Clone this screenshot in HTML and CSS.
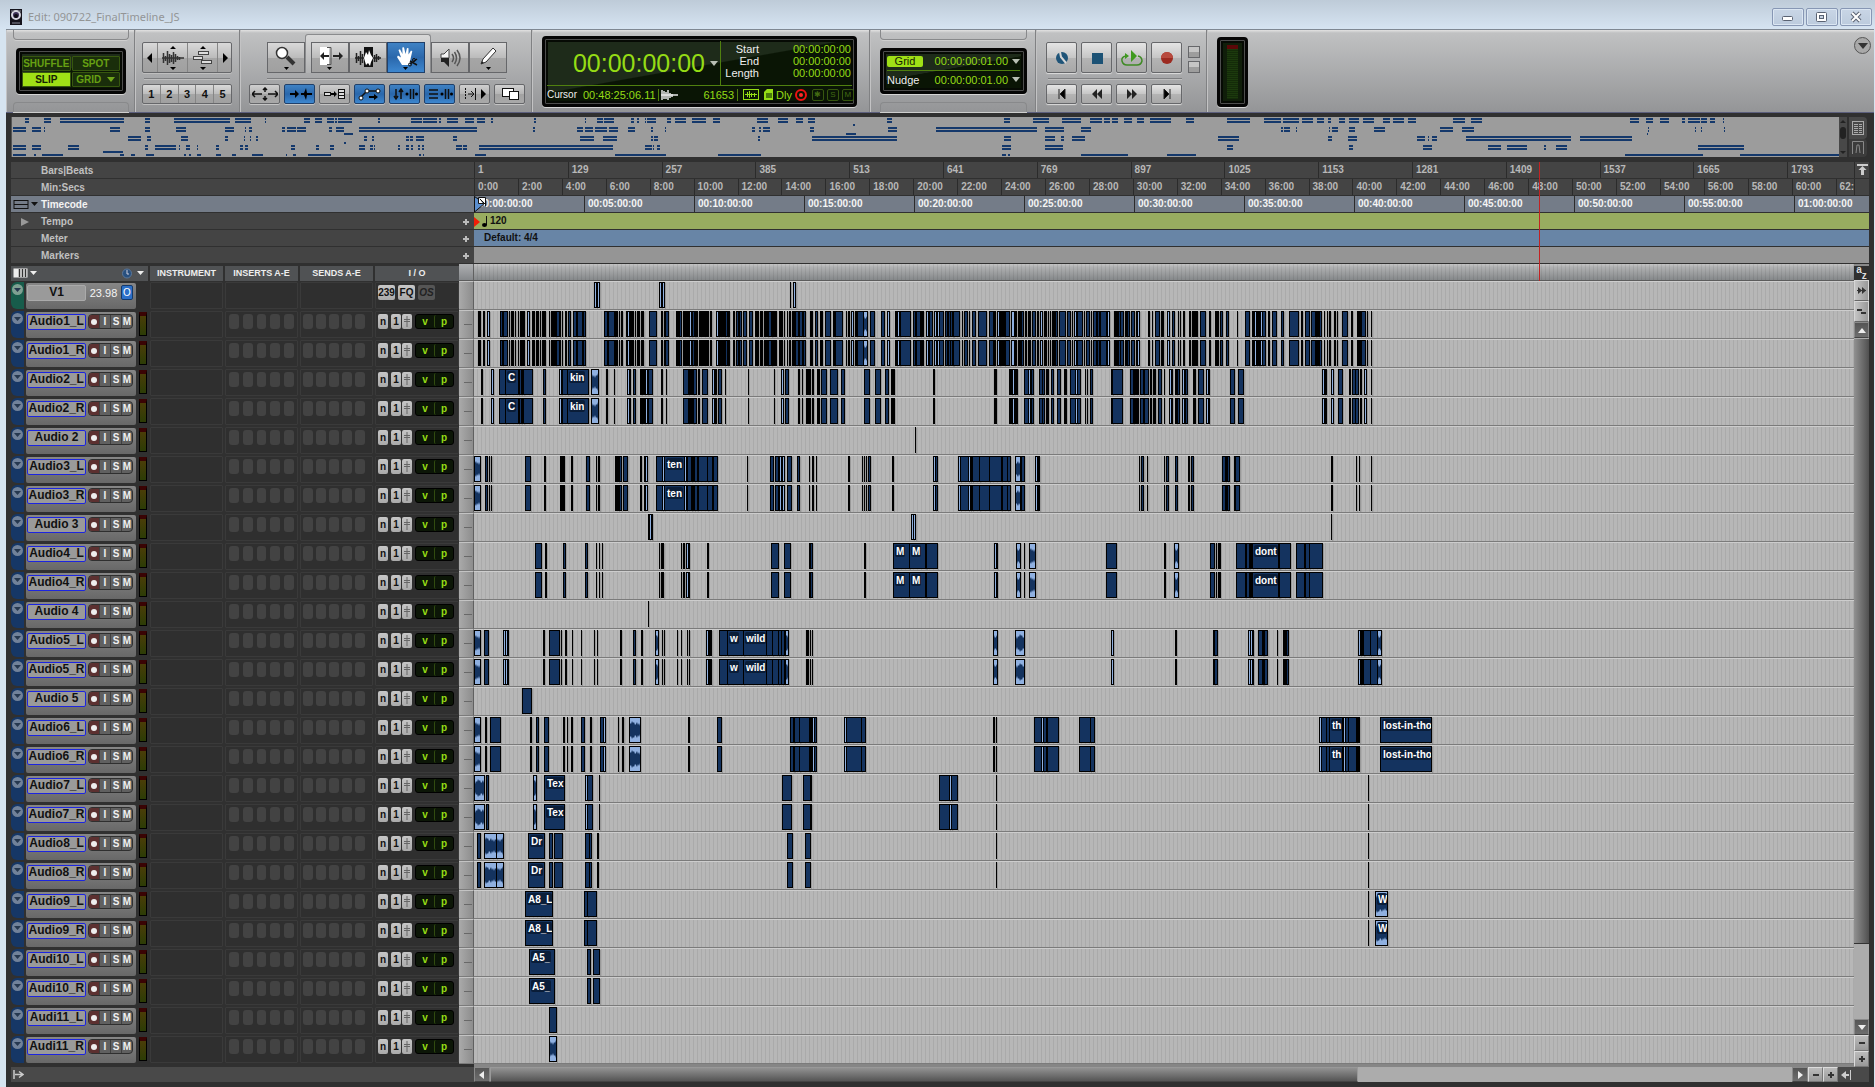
FILE: index.html
```html
<!DOCTYPE html>
<html lang="en">

<head>
    <meta charset="UTF-8">
    <meta name="viewport" content="width=device-width, initial-scale=1.0">
    <title>Edit: 090722_FinalTimeline_JS</title>
    <link rel="stylesheet" href="styles.css">
</head>

<body>
    <header class="titlebar">
        <svg class="app-icon" width="12" height="16" viewBox="0 0 12 16">
            <rect width="12" height="16" fill="#15131c"/>
            <circle cx="6" cy="6" r="4" fill="#3b2e55" stroke="#d5d5de" stroke-width="2"/>
            <circle cx="6" cy="7" r="2" fill="#0c0a12"/>
            <path d="M1 2h3M8 2h3M2 14h8" stroke="#8b8b98"/>
        </svg>
        <h1>Edit: 090722_FinalTimeline_JS</h1>
        <div class="window-buttons">
            <button aria-label="Minimize"><svg width="14" height="12"><rect x="1.500" y="5.500" width="10" height="4" rx="1" fill="#fff" stroke="#5a6373"/></svg></button>
            <button aria-label="Maximize"><svg width="14" height="12"><rect x="1.500" y="1.500" width="10" height="9" rx="1" fill="#fff" stroke="#5a6373"/><rect x="4.500" y="4.500" width="4" height="3" fill="#c5d1df" stroke="#5a6373"/></svg></button>
            <button aria-label="Close"><svg width="14" height="12"><path d="M3 2l8 8M11 2l-8 8" stroke="#5a6373" stroke-width="4"/><path d="M3 2l8 8M11 2l-8 8" stroke="#fff" stroke-width="2"/></svg></button>
        </div>
    </header>

    <div class="window">
        <div class="toolbar">
            <div class="group group-modes">
                <span class="tab tab-top"></span>
                <div class="display modes">
                    <button>SHUFFLE</button>
                    <button>SPOT</button>
                    <button class="on">SLIP</button>
                    <button>GRID <svg width="8" height="5"><path d="M0 0h8l-4 5z" fill="#6fa61a"/></svg></button>
                </div>
                <span class="tab tab-bottom"></span>
            </div>

            <div class="group group-zoom">
                <div class="bar big">
                    <button class="narrow" aria-label="Zoom out"><svg width="8" height="12"><path d="M6 1v10l-5-5z"/></svg></button>
                    <button class="wide" aria-label="Audio zoom"><svg width="24" height="26" viewBox="0 0 24 26"><path d="M9 4h6l-3-3zM9 22h6l-3 3z"/><path d="M1 13h22M2.500 8v10M4.500 11v5M6.500 6v14M8.500 9v9M10.500 10v7M12.500 7v12M14.500 9v8M16.500 11v4M18.500 12v3" stroke="#333" stroke-width="1.500"/></svg></button>
                    <button class="wide" aria-label="MIDI zoom"><svg width="24" height="26" viewBox="0 0 24 26"><path d="M9 4h6l-3-3zM9 22h6l-3 3z"/><g fill="#ddd" stroke="#444"><rect x="7.500" y="6.500" width="10" height="3"/><rect x="2.500" y="11.500" width="9" height="3"/><rect x="10.500" y="15.500" width="10" height="3"/></g></svg></button>
                    <button class="narrow" aria-label="Zoom in"><svg width="8" height="12"><path d="M2 1v10l5-5z"/></svg></button>
                </div>
                <span class="rule"></span>
                <div class="bar presets">
                    <button>1</button><button>2</button><button>3</button><button>4</button><button>5</button>
                </div>
            </div>

            <div class="group group-tools">
                <div class="tool-row">
                    <button class="tool" aria-label="Zoomer"><svg width="26" height="26" viewBox="0 0 26 26"><path d="M14 12l7 7" stroke="#333" stroke-width="4"/><circle cx="9" cy="8" r="5.500" fill="#fff" stroke="#333" stroke-width="1.500"/><path d="M11 22h5l-2.500 3z"/></svg></button>
                    <div class="smart">
                        <button class="tool" aria-label="Trim"><svg width="28" height="26" viewBox="0 0 28 26"><path d="M4 2h9v18H4z" fill="#fff"/><path d="M11 2.500h4v17h-4" fill="none" stroke="#555"/><path d="M4 11l4-4v3h5v2H8v3zM27 11l-4-4v3h-6v2h6v3z" fill="#222"/><path d="M11 22h5l-2.500 3z"/></svg></button>
                        <button class="tool" aria-label="Selector"><svg width="28" height="26" viewBox="0 0 28 26"><rect x="10" y="2" width="9" height="20" fill="#111"/><path d="M2.500 8v10M4.500 11v5M6.500 6v14M8.500 9v9M20.500 10v7M22.500 9v8M24.500 11v4M1 13h26" stroke="#222" stroke-width="1.500"/><path d="M10 13l2-6 2 3 1-5 2 5 2 3-2 4-1 4-2-3-2 2z" fill="#fff"/></svg></button>
                        <button class="tool on" aria-label="Grabber"><svg width="28" height="26" viewBox="0 0 28 26"><path d="M10 20l-5-8 1-1.500 3 2L6.500 5l1.500-.800L10.500 9 10.300 2.500l1.700-.300L13.500 9l1.500-6 1.500.300L16.500 9.500l2.500-4 1.300.800L18.500 14l-1 6z" fill="#fff"/><path d="M18 16l7 4M18 19l7-5" stroke="#111" stroke-width="1.500"/><circle cx="18" cy="19.500" r="1.500" fill="none" stroke="#111"/><circle cx="22" cy="15" r="1.500" fill="none" stroke="#111"/><path d="M11 22h5l-2.500 3z"/></svg></button>
                    </div>
                    <button class="tool" aria-label="Scrubber"><svg width="26" height="26" viewBox="0 0 26 26"><path d="M4 9h3l5-5v9H4z" fill="#f4f4f4" stroke="#444"/><path d="M4 13h8v9l-5-5H4z" fill="#222"/><path d="M15 9q3 4 0 8M17.500 7q4 6 0 12M20 5q6 8 0 16" fill="none" stroke="#555" stroke-width="1.500"/></svg></button>
                    <button class="tool" aria-label="Pencil"><svg width="26" height="26" viewBox="0 0 26 26"><path d="M6 19l2-5L18 3l3 3L11 17z" fill="#fff" stroke="#333"/><path d="M6 19l1-3 2 2z" fill="#222"/><path d="M11 22h5l-2.500 3z"/></svg></button>
                </div>
                <span class="rule"></span>
                <div class="option-row">
                    <button aria-label="Zoom toggle"><svg width="26" height="14"><path d="M0 7h10M16 7h10M3 4L0 7l3 3M23 4l3 3-3 3M13 1v4M13 9v4M11 3l2-2 2 2M11 11l2 2 2-2" fill="none" stroke="#111" stroke-width="1.500"/></svg></button>
                    <button class="on" aria-label="Tab to transients"><svg width="26" height="14"><path d="M3 6h5V3l4 4-4 4V8H3zM14 6h3l2-5 1 5h5v2h-5l-1 5-2-5h-3z"/></svg></button>
                    <button aria-label="Mirrored MIDI editing"><svg width="26" height="14"><g fill="#ddd" stroke="#111"><rect x="2.500" y="5.500" width="6" height="3"/><rect x="16.500" y="2.500" width="6" height="3"/><rect x="16.500" y="5.500" width="6" height="3"/><rect x="16.500" y="8.500" width="6" height="3"/></g><path d="M9 6h3V4l3 3-3 3V8H9z"/></svg></button>
                    <button class="on" aria-label="Automation follows edit"><svg width="26" height="14"><path d="M4 10L10 4 20 4" fill="none" stroke="#111" stroke-width="1.500"/><g fill="#fff" stroke="#111"><circle cx="4" cy="11" r="2"/><circle cx="10" cy="4" r="2"/><circle cx="21" cy="4" r="2"/></g><path d="M12 9h5V7l4 3-4 3v-2h-5z"/></svg></button>
                    <button class="on" aria-label="Link timeline and edit selection"><svg width="26" height="14"><path d="M4 2v8M9 4v8M2 9l2 3 2-3M7 5l2-3 2 3M18.500 2v10M21.500 2v10" fill="none" stroke="#111" stroke-width="1.500"/><circle cx="15" cy="7" r="1.500"/><circle cx="24.500" cy="7" r="1.500"/></svg></button>
                    <button class="on" aria-label="Link track and edit selection"><svg width="26" height="14"><path d="M2 3h9M2 7h9M2 11h9M18.500 2v10M21.500 2v10" fill="none" stroke="#111" stroke-width="1.500"/><circle cx="15" cy="7" r="1.500"/><circle cx="24.500" cy="7" r="1.500"/></svg></button>
                    <button aria-label="Insertion follows playback"><svg width="26" height="14"><path d="M3.500 1v12" stroke="#111" stroke-dasharray="2 1"/><path d="M6 7h5M9 4l3 3-3 3M13.500 1v12" fill="none" stroke="#111"/><path d="M19 2l5 5-5 5z"/></svg></button>
                    <button aria-label="Layered editing"><svg width="26" height="14"><rect x="5.500" y="1.500" width="11" height="8" fill="#fff" stroke="#111"/><rect x="12.500" y="4.500" width="9" height="8" fill="#fff" stroke="#111"/></svg></button>
                </div>
            </div>

            <div class="group group-counter">
                <div class="display counter">
                    <div class="counter-top">
                        <button class="main-counter">00:00:00:00 <svg width="8" height="5"><path d="M0 0h8l-4 5z" fill="#b9bfb4"/></svg></button>
                        <dl class="selection">
                            <dt>Start</dt><dd>00:00:00:00</dd>
                            <dt>End</dt><dd>00:00:00:00</dd>
                            <dt>Length</dt><dd>00:00:00:00</dd>
                        </dl>
                    </div>
                    <div class="counter-bottom">
                        <span class="cursor-label">Cursor</span>
                        <span class="cursor-value">00:48:25:06.11</span>
                        <svg class="cursor-wave" width="18" height="12"><path d="M1 1v10M3 2v8M5 3v7M7 1v10M9 4v5M11 5v3M0 6h17" stroke="#e9e9e9" stroke-width="1.500"/></svg>
                        <span class="cursor-sample">61653</span>
                        <svg width="16" height="12"><rect x=".500" y=".500" width="15" height="10" fill="none" stroke="#95dc15"/><path d="M2 5.500h12M4.500 3v5M6.500 2v7M8.500 4v4M11.500 4v4" stroke="#95dc15"/></svg>
                        <svg width="9" height="12"><path d="M3 0h6v11H0V3z" fill="#95dc15"/><path d="M2 4h6v5H2z" fill="#4b7a0c"/></svg>
                        <span class="dly">Dly</span>
                        <svg width="12" height="12"><circle cx="6" cy="6" r="5" fill="none" stroke="#ee1111" stroke-width="2"/><circle cx="6" cy="6" r="2" fill="#ff2a2a"/></svg>
                        <span class="flag">✱</span><span class="flag">S</span><span class="flag">M</span>
                    </div>
                </div>
            </div>

            <div class="group group-grid">
                <span class="tab tab-top"></span>
                <div class="display gridnudge">
                    <div class="gn-row"><button class="grid-on">Grid</button><span class="gn-value">00:00:00:01.00</span><svg width="8" height="5"><path d="M0 0h8l-4 5z" fill="#b9bfb4"/></svg></div>
                    <div class="gn-row"><span class="nudge">Nudge</span><span class="gn-value">00:00:00:01.00</span><svg width="8" height="5"><path d="M0 0h8l-4 5z" fill="#b9bfb4"/></svg></div>
                </div>
                <span class="tab tab-bottom"></span>
            </div>

            <div class="group group-transport">
                <div class="transport-top">
                    <button aria-label="Online"><svg width="16" height="16"><circle cx="8" cy="8" r="6" fill="#1f5478"/><path d="M6 2l1 5 5 6" stroke="#d6d6d6" stroke-width="2" fill="none"/></svg></button>
                    <button aria-label="Stop"><svg width="16" height="16"><rect x="3" y="3" width="11" height="11" fill="#1c5275"/></svg></button>
                    <button aria-label="Play"><svg width="24" height="18"><path d="M6 7q-5 1-4 5 1 4 5 4h10q4 0 5-4 0-4-4-5" fill="none" stroke="#3f8a25" stroke-width="1.500"/><path d="M5 4l4 3-4 3zM11 1l6 6-6 6z" fill="#3f9a1f"/></svg></button>
                    <button aria-label="Record"><svg width="16" height="16"><circle cx="8" cy="8" r="6" fill="#9c2a20"/><path d="M2 8a6 6 0 0 1 12 0z" fill="#b84a3e"/></svg></button>
                    <div class="mini"><button aria-label="Pre-roll"></button><button aria-label="Post-roll"></button></div>
                </div>
                <span class="rule"></span>
                <div class="transport-bottom">
                    <button aria-label="Return to zero"><svg width="14" height="10"><path d="M4 0v10M10 0v10L5 5z" stroke="#222"/></svg></button>
                    <button aria-label="Rewind"><svg width="14" height="10"><path d="M7 0v10L2 5zM12 0v10L7 5z" fill="#222"/></svg></button>
                    <button aria-label="Fast forward"><svg width="14" height="10"><path d="M2 0v10l5-5zM7 0v10l5-5z" fill="#222"/></svg></button>
                    <button aria-label="Go to end"><svg width="14" height="10"><path d="M10 0v10M4 0v10l5-5z" stroke="#222"/></svg></button>
                </div>
            </div>

            <div class="group group-meter">
                <div class="display out-meter"><span></span></div>
                <button class="round" aria-label="Toolbar menu"><svg width="10" height="6"><path d="M0 0h10l-5 6z" fill="#333"/></svg></button>
            </div>
        </div>

        <div class="universe">
            <svg id="universe" viewBox="0 0 1827 40" preserveAspectRatio="none"></svg>
            <div class="universe-scroll"><i class="up"></i><b></b><i class="down"></i></div>
            <div class="universe-buttons">
                <button aria-label="Show track list"><svg width="12" height="14"><rect x=".500" y=".500" width="11" height="13" fill="none" stroke="#aaa"/><path d="M2 3.500h8M2 5.500h8M2 7.500h8M2 9.500h8M2 11.500h8" stroke="#aaa" stroke-dasharray="4 1"/></svg></button>
                <button class="off" aria-label="Show MIDI editor"><svg width="12" height="14"><path d="M.500 13V.500h11V13M4 12l1-8h2l1 8" fill="none" stroke="#888"/></svg></button>
            </div>
        </div>

        <div class="rulers" id="rulers">
            <div class="ruler"><span class="ruler-name">Bars|Beats</span><div class="ticks" data-ruler="bars"></div><button class="ruler-end" aria-label="Scroll to top"><svg width="11" height="12"><path d="M0 1h11" stroke="#ccc" stroke-width="2"/><path d="M5.500 2l4 4h-2.500v5h-3V6H1.500z" fill="#ccc"/></svg></button></div>
            <div class="ruler"><span class="ruler-name">Min:Secs</span><div class="ticks" data-ruler="mins"></div><span class="ruler-end"></span></div>
            <div class="ruler main"><span class="ruler-name"><svg class="ruler-menu" width="26" height="11"><path d="M1 1.500h14M1 5.500h14M1 9.500h14M1 1v9M15 1v9" stroke="#111"/><path d="M18 3h7l-3.500 4z" fill="#111"/></svg>Timecode</span><div class="ticks" data-ruler="timecode"></div><span class="ruler-end"></span></div>
            <div class="ruler tempo"><span class="ruler-name"><svg class="ruler-arrow" width="8" height="8"><path d="M0 0v8l8-4z" fill="#999"/></svg>Tempo<button class="add" aria-label="Add tempo change"></button></span><div class="ticks"><svg class="tempo-mark" width="15" height="15"><path d="M0 4l6 5-6 5z" fill="#f21d06"/><path d="M12.500 3v9" stroke="#111"/><ellipse cx="10.500" cy="12" rx="2.500" ry="2"/></svg><span>120</span></div></div>
            <div class="ruler meter"><span class="ruler-name">Meter<button class="add" aria-label="Add meter change"></button></span><div class="ticks"><span>Default: 4/4</span></div></div>
            <div class="ruler markers"><span class="ruler-name">Markers<button class="add" aria-label="Add marker"></button></span><div class="ticks"></div></div>
            <div class="playhead-area"><span class="playhead"></span><svg class="start-flag" width="12" height="17"><path d="M.500.500v15.500l10-8.500z" fill="#5b8fd0" stroke="#111"/><path d="M4.500 1.500h7v9M4.500 1.500v6h7" fill="#fff" stroke="#111"/><path d="M6 3l4 4" stroke="#111"/></svg></div>
        </div>

        <div class="edit">
            <div class="track-list">
                <div class="track-head">
                    <span class="view-menu"><svg width="26" height="11"><rect x=".500" y=".500" width="14" height="9" fill="#eee"/><path d="M6.500 1v8M9.500 1v8M12.500 1v8" stroke="#333" stroke-width="1.500"/><path d="M17 3h7l-3.500 4z" fill="#eee"/></svg><svg width="24" height="11"><circle cx="5" cy="5.500" r="4.500" fill="#28507f" stroke="#5b7799"/><path d="M5 2v4h2" fill="none" stroke="#ccd"/><path d="M15 3h7l-3.500 4z" fill="#eee"/></svg></span>
                    <span>INSTRUMENT</span><span>INSERTS A-E</span><span>SENDS A-E</span><span class="io">I / O</span>
                </div>
                <div id="tracks"></div>
                <div class="list-foot"><svg width="11" height="9"><path d="M1 0v9M2 4.500h7M6 1.500l4 3-4 3" fill="none" stroke="#ccc" stroke-width="1.500"/></svg></div>
            </div>
            <div class="lane-area">
                <div class="lane-head"><i></i><b></b></div>
                <div id="lanes"></div>
                <div class="h-scroll">
                    <button class="dark" aria-label="Scroll left"><svg width="6" height="8"><path d="M5 0v8L0 4z" fill="#eee"/></svg></button>
                    <div class="h-track"><span></span></div>
                    <button class="dark" aria-label="Scroll right"><svg width="6" height="8"><path d="M1 0v8l5-4z" fill="#eee"/></svg></button>
                    <button class="zoom-btn minus" aria-label="Zoom out horizontally"></button>
                    <button class="zoom-btn plus" aria-label="Zoom in horizontally"></button>
                    <button class="corner" aria-label="Scroll to end"><svg width="11" height="10"><path d="M0 5l5-4v3h3v2H5v3zM9 0v10h1V0z" fill="#ccc"/></svg></button>
                </div>
            </div>
            <div class="v-scroll">
                <button class="az" aria-label="Keyboard focus"><span>a</span><span>z</span></button>
                <button class="side" aria-label="Audio height"><svg width="9" height="7"><path d="M0 3.500h9" stroke="#333"/><path d="M1 0l4 3.500L1 7zM5 0l4 3.500L5 7z" fill="#333"/></svg></button>
                <button class="side" aria-label="MIDI height"><svg width="9" height="6"><path d="M0 1h5M4 4h5" stroke="#333" stroke-width="2"/></svg></button>
                <button class="dark" aria-label="Scroll up"><svg width="8" height="5"><path d="M0 5h8L4 0z" fill="#eee"/></svg></button>
                <div class="v-track"><span></span></div>
                <button class="dark" aria-label="Scroll down"><svg width="8" height="5"><path d="M0 0h8L4 5z" fill="#eee"/></svg></button>
                <button class="zoom-btn minus" aria-label="Zoom out vertically"></button>
                <button class="zoom-btn plus" aria-label="Zoom in vertically"></button>
                <span class="v-foot"></span>
            </div>
        </div>
    </div>

    <script src="script.js"></script>
</body>

</html>
```
FILE: styles.css
```css
* {
    box-sizing: border-box;
}

body {
    display: flex;
    flex-direction: column;
    min-height: 100vh;
    margin: 0;
    padding: 0 1px 0 6px;
    background-color: #d6e4f0;
    font-family: "Liberation Sans", Arial, sans-serif;
    font-size: 10px;
    color: #ddd;
    overflow: hidden;
}

button {
    display: flex;
    align-items: center;
    justify-content: center;
    margin: 0;
    padding: 0;
    border: none;
    font-family: inherit;
    font-size: 10px;
    line-height: 1;
    color: #111;
    background: none;
}

svg {
    display: block;
    flex: none;
}

/* title bar */
.titlebar {
    display: flex;
    align-items: center;
    height: 29px;
    margin: 0 -1px 0 -6px;
    padding: 5px 3px 0 10px;
    background: linear-gradient(#becbd8, #d6e4f2);
}

.titlebar h1 {
    flex: 1;
    margin: 0 0 0 6px;
    font-family: "Noto Sans", "Open Sans", sans-serif;
    font-size: 11px;
    font-weight: normal;
    line-height: 16px;
    color: #939596;
}

.window-buttons {
    display: flex;
    gap: 2px;
}

.window-buttons button {
    width: 32px;
    height: 18px;
    border: 1px solid #8797b4;
    border-radius: 2px;
    background: linear-gradient(#c9d6e6, #bccbdd);
    box-shadow: inset 0 0 0 1px #dbe6f2;
}

.window {
    display: flex;
    flex-direction: column;
    flex: 1;
    background-color: #303030;
}

/* toolbar */
.toolbar {
    display: flex;
    height: 84px;
    border-top: 1px solid #7f8893;
    border-bottom: 1px solid #5c5f7d;
    background: linear-gradient(#e2e2e2, #c0c1c2 3px, #949597);
}

.group {
    display: flex;
    flex-direction: column;
    flex: none;
    border-left: 1px solid #c3c3c4;
    border-right: 1px solid #808183;
}

.tab {
    flex: none;
    border: 1px solid #88898b;
    box-shadow: 0 1px 0 #cfcfcf;
}

.tab-top {
    height: 10px;
    margin-bottom: 8px;
    border-top: none;
    border-radius: 0 0 4px 4px;
}

.tab-bottom {
    height: 10px;
    margin-top: 8px;
    border-bottom: none;
    border-radius: 4px 4px 0 0;
}

.display {
    border: 3px solid #050505;
    border-radius: 4px;
    background: linear-gradient(170deg, #1e2b1a 45%, #0a1505 46%);
    box-shadow: inset 0 0 0 1px #4d4d4d, inset 0 0 0 3px #060a04, 0 1px 0 #d5d5d5;
}

.group-modes {
    width: 129px;
    padding: 0 5px 0 6px;
}

.modes {
    display: grid;
    grid-template-columns: 1fr 1fr;
    gap: 1px;
    height: 46px;
    margin: 0 3px;
    padding: 5px 3px 4px;
}

.modes button {
    border: 1px solid #37570f;
    border-radius: 1px;
    font-weight: bold;
    font-size: 10px;
    color: #67a013;
    gap: 6px;
    background-color: #1a2e0b;
}

.modes .on {
    color: #142103;
    background-color: #9fe016;
}

.group-zoom {
    width: 105px;
    padding: 12px 7px 0 6px;
}

.bar {
    display: flex;
    border: 1px solid #66676a;
    border-radius: 2px;
    background: linear-gradient(#d9d9d9, #bcbcbc 50%, #a6a6a6 51%, #a0a0a0);
    box-shadow: 0 1px 0 #bfbfbf;
}

.bar button + button {
    border-left: 1px solid #858585;
}

.big {
    height: 31px;
}

.narrow {
    width: 14px;
}

.wide {
    flex: 1;
}

.rule {
    height: 2px;
    margin: 5px 2px 4px;
    border-top: 1px solid #7d7e80;
    border-bottom: 1px solid #bdbdbd;
}

.presets {
    height: 20px;
}

.presets button {
    flex: 1;
    font-size: 11px;
    font-weight: bold;
}

.group-tools {
    width: 292px;
    padding: 4px 6px 0 8px;
}

.tool-row {
    display: flex;
    align-items: flex-end;
    height: 39px;
    padding-left: 18px;
}

.tool {
    flex: none;
    width: 38px;
    height: 31px;
    border: 1px solid #66676a;
    background: linear-gradient(#d9d9d9, #bcbcbc 50%, #a6a6a6 51%, #a0a0a0);
}

.smart {
    display: flex;
    height: 39px;
    padding: 7px 5px 0;
    border: 1px solid #8a8b8d;
    border-bottom: none;
    border-radius: 3px 3px 0 0;
    background: linear-gradient(#d8d8d8, #b0b1b2);
}

.tool.on,
.option-row .on {
    border-color: #20406a;
    background: linear-gradient(#3f82c4, #2a67ab 50%, #3d87cf);
}

.group-tools .rule {
    margin-left: 18px;
    margin-right: 19px;
}

.option-row {
    display: flex;
    gap: 4px;
}

.option-row button {
    flex: 1;
    height: 20px;
    border: 1px solid #66676a;
    border-radius: 2px;
    background: linear-gradient(#cfcfcf, #b4b4b4 50%, #a2a2a2 51%, #a9a9a9);
    box-shadow: 0 1px 0 #c5c5c5;
}

.group-counter {
    width: 338px;
    padding: 6px 12px 0 9px;
}

.counter {
    display: flex;
    flex-direction: column;
    height: 71px;
    padding: 2px 2px 1px;
    color: #95dc15;
}

.counter-top {
    display: flex;
    flex: 1;
    border-bottom: 1px solid #50800f;
}

.main-counter {
    flex: 1;
    justify-content: flex-end;
    gap: 5px;
    padding-right: 2px;
    border-right: 1px solid #50800f;
    font-size: 25px;
    color: #95dc15;
}

.selection {
    display: grid;
    grid-template-columns: 38px 1fr;
    align-content: start;
    width: 131px;
    margin: 0;
    padding-top: 2px;
    font-size: 11px;
    line-height: 12px;
    text-align: right;
}

.selection dt {
    color: #eee;
}

.selection dd {
    margin: 0 1px 0 0;
}

.counter-bottom {
    display: flex;
    align-items: center;
    gap: 5px;
    height: 17px;
    font-size: 11px;
}

.cursor-label {
    width: 31px;
    font-size: 10px;
    color: #eee;
}

.cursor-value {
    width: 76px;
    border-right: 1px solid #50800f;
}

.cursor-wave {
    margin-left: -3px;
}

.cursor-sample {
    width: 54px;
    padding-right: 3px;
    border-right: 1px solid #50800f;
    text-align: right;
}

.dly {
    margin: 0 -2px;
}

.flag {
    width: 12px;
    height: 12px;
    margin-right: -2px;
    border: 1px solid #37570f;
    border-radius: 2px;
    font-size: 8px;
    line-height: 10px;
    text-align: center;
    color: #426a12;
}

.group-grid {
    width: 166px;
    padding: 0 8px 0 9px;
}

.gridnudge {
    height: 46px;
    padding: 1px 4px;
    color: #95dc15;
    font-size: 11px;
}

.gn-row {
    display: flex;
    align-items: center;
    gap: 4px;
    height: 18px;
}

.gn-row + .gn-row {
    border-top: 1px solid #50800f;
}

.grid-on {
    width: 36px;
    height: 11px;
    border-radius: 2px;
    font-size: 11px;
    color: #142103;
    background-color: #9fe016;
}

.nudge {
    color: #eee;
}

.gn-value {
    margin-left: auto;
}

.group-transport {
    width: 171px;
    padding: 12px 6px 0 9px;
}

.transport-top,
.transport-bottom {
    display: flex;
    gap: 4px;
}

.transport-top > button,
.transport-bottom button {
    width: 31px;
    height: 31px;
    border: 1px solid #66676a;
    border-radius: 2px;
    background: linear-gradient(#e4e4e4, #c6c6c6 50%, #b4b4b4 51%, #a8a8a8);
    box-shadow: 0 1px 1px #ddd;
}

.transport-bottom button {
    height: 20px;
}

.mini {
    display: flex;
    flex-direction: column;
    justify-content: flex-end;
    gap: 3px;
    padding-left: 2px;
}

.mini button {
    width: 12px;
    height: 12px;
    border: 1px solid #66676a;
    background: linear-gradient(#c5c5c5 50%, #9d9d9d 51%);
}

.group-transport .rule {
    margin-right: 18px;
}

.group-meter {
    flex: 1;
    flex-direction: row;
    align-items: flex-start;
    justify-content: space-between;
    padding: 7px 3px 0 9px;
    border-right: none;
}

.out-meter {
    display: flex;
    width: 31px;
    height: 70px;
    padding: 5px 7px;
    background: #101e0a;
}

.out-meter span {
    flex: 1;
    border-top: 4px solid #5a0808;
    background: repeating-linear-gradient(#1c3a0d 0 1px, #142b09 1px 2px);
}

.round {
    width: 17px;
    height: 17px;
    border: 1px solid #555;
    border-radius: 50%;
    background-color: #a9a9a9;
}

/* universe */
.universe {
    display: flex;
    height: 44px;
    margin: 0 7px 0 5px;
    padding-top: 4px;
}

#universe {
    flex: 1;
    width: 0;
    height: 40px;
    border-left: 1px solid #555;
    background-color: #9c9c9c;
}

.universe-scroll {
    display: flex;
    flex-direction: column;
    align-items: center;
    width: 8px;
    margin-right: 2px;
    background-color: #484848;
}

.universe-scroll b {
    width: 6px;
    height: 12px;
    margin: 4px 0 auto;
    border-radius: 3px;
    background-color: #222;
}

.up,
.down {
    border: 3px solid transparent;
}

.up {
    border-bottom-color: #222;
}

.down {
    border-top-color: #222;
}

.universe-buttons button {
    width: 18px;
    height: 22px;
    border-radius: 0 4px 4px 0;
    background-color: #484848;
}

.universe-buttons .off {
    height: 18px;
    background-color: #3c3c3c;
}

/* rulers */
.rulers {
    position: relative;
    margin: 5px 5px 0;
}

.ruler {
    display: flex;
    height: 16px;
    margin-bottom: 1px;
    font-weight: bold;
    line-height: 16px;
    color: #b8b8b8;
    background-color: #444;
}

.ruler-name {
    display: flex;
    align-items: center;
    position: relative;
    width: 463px;
    padding: 1px 0 0 30px;
    color: #c0c0c0;
}

.ruler-menu {
    position: absolute;
    left: 2px;
}

.ruler-arrow {
    position: absolute;
    left: 10px;
}

.add {
    margin: 0 5px 0 auto;
    width: 6px;
    height: 6px;
    background: linear-gradient(#bbb, #bbb) center / 6px 2px no-repeat, linear-gradient(#bbb, #bbb) center / 2px 6px no-repeat;
}

.ticks {
    display: flex;
    flex: 1;
    width: 0;
    overflow: hidden;
}

.ticks > span {
    flex: none;
    padding-left: 3px;
    border-left: 1px solid #2b2b2b;
}

.ruler-end {
    width: 15px;
    height: 16px;
    border-left: 1px solid #2b2b2b;
}

.main,
.main .ruler-name {
    color: #f4f4f4;
    background-color: #747c88;
}

.main .ruler-end {
    border-left: none;
}

.tempo .ticks {
    color: #111;
    background-color: #98ac60;
}

.tempo .ticks span {
    border: none;
    padding-left: 1px;
}

.meter .ticks {
    color: #111;
    background-color: #6885a6;
}

.meter .ticks span {
    border: none;
    padding-left: 10px;
}

.markers .ticks {
    background-color: #959595;
}

.playhead-area {
    position: absolute;
    top: 0;
    bottom: -17px;
    left: 463px;
    right: 15px;
    z-index: 1;
}

.playhead {
    position: absolute;
    top: 0;
    bottom: 0;
    left: 77.17%;
    width: 1px;
    background-color: #c32222;
}

.start-flag {
    position: absolute;
    top: 34px;
    left: 0;
}

/* edit area */
.edit {
    display: flex;
    margin: 0 5px;
}

.track-list {
    display: flex;
    flex-direction: column;
    width: 448px;
}

.track-head {
    display: grid;
    grid-template-columns: 137px 73px 73px 73px 84px;
    gap: 2px;
    height: 17px;
    padding: 2px 0 1px;
    font-weight: bold;
    font-size: 9px;
    line-height: 15px;
    text-align: center;
    color: #eee;
}

.track-head > span {
    background-color: #505254;
}

.view-menu {
    display: flex;
    align-items: center;
    justify-content: space-between;
    padding: 0 2px;
}

.track {
    display: grid;
    grid-template-columns: 13px 122px 73px 73px 73px 84px;
    column-gap: 2px;
    height: 29px;
    padding: 1px 0;
}

.track-color {
    display: flex;
    justify-content: center;
    padding-top: 2px;
    border-radius: 6px 0 0 6px;
    background-color: #163766;
}

.video .track-color {
    background-color: #175c4b;
}

.track-color button {
    width: 11px;
    height: 11px;
    border-radius: 50%;
    background-color: #71829a;
}

.video .track-color button {
    background-color: #7fa092;
}

.track-main {
    display: flex;
    gap: 3px;
}

.plate {
    display: flex;
    align-items: flex-start;
    gap: 2px;
    width: 110px;
    height: 26px;
    margin-top: 1px;
    padding: 2px 1px 0;
    border-radius: 2px;
    background: linear-gradient(#868686, #686868);
}

.video .plate {
    gap: 1px;
}

.track-name {
    flex: none;
    width: 59px;
    height: 16px;
    padding-bottom: 2px;
    border: 1px solid #1c24e0;
    border-radius: 2px;
    font-size: 12px;
    font-weight: bold;
    line-height: 14px;
    white-space: nowrap;
    background-color: #9a9a9a;
}

.video .track-name {
    border-color: #aaa;
}

.rate {
    width: 33px;
    font-size: 11px;
    line-height: 17px;
    text-align: center;
    color: #f4f4f4;
}

.video-online {
    width: 12px;
    height: 15px;
    border: 1px solid #143a6c;
    border-radius: 2px;
    color: #fff;
    background-color: #2c70c8;
}

.risma {
    display: flex;
    width: 45px;
    height: 15px;
    border: 1px solid #2f2f2f;
    border-radius: 4px;
    overflow: hidden;
    background-color: #606060;
}

.risma button {
    flex: 1;
    border-left: 1px solid #3f3f3f;
    font-weight: bold;
    color: #f0f0f0;
}

.risma button:first-child {
    border-left: none;
    background-color: #5c3030;
}

.dot {
    width: 6px;
    height: 6px;
    border-radius: 50%;
    background-color: #eee;
}

.level {
    width: 8px;
    height: 24px;
    margin-top: 1px;
    border: 1px solid #000;
    border-top: 4px solid #3a0404;
    background: linear-gradient(#4a3d08, #2c3c06);
}

.cell {
    display: flex;
    border: 1px solid #3a3a3a;
    border-radius: 1px;
    background-color: #2f2f2f;
}

.slots {
    gap: 4px;
    padding: 2px 3px;
}

.slots.sends {
    gap: 3px;
    padding-left: 2px;
}

.slots i {
    width: 10px;
    height: 15px;
    border-radius: 3px;
    background-color: #434343;
}

.io-cell {
    gap: 3px;
    padding: 2px;
}

.io-cell button {
    height: 15px;
    border-radius: 2px;
    font-weight: bold;
    background: linear-gradient(#c6c6c6, #aaa);
}

.io-cell .nn {
    width: 10px;
}

.io-cell .out {
    width: 10px;
    margin-right: -2px;
}

.io-cell .fader {
    width: 10px;
}

.io-cell .vid {
    width: 17px;
}

.io-cell .dim {
    color: #222;
    font-style: italic;
    background: #555;
}

.vp {
    display: flex;
    width: 39px;
    height: 15px;
    border: 1px solid #000;
    border-radius: 3px;
    background-color: #0c1607;
}

.io-cell .vp button {
    flex: 1;
    height: 13px;
    color: #95dc15;
    background: none;
}

.io-cell .vp button + button {
    border-left: 1px solid #314b10;
}

.list-foot {
    display: flex;
    align-items: center;
    height: 15px;
    margin: 3px -15px 0 0;
    padding-left: 2px;
    background-color: #494949;
}

.lane-area {
    flex: 1;
    width: 0;
}

.lane-head {
    display: flex;
    height: 17px;
    border-bottom: 1px solid #5c5c5c;
}

.lane-head i {
    width: 15px;
    border-right: 1px solid #606060;
    background: linear-gradient(#aeb0b2, #85888b);
}

.lane-head b {
    flex: 1;
    background: repeating-linear-gradient(90deg, rgba(0, 0, 0, 0) 0 3px, rgba(0, 0, 0, 0.07) 3px 4px), linear-gradient(#c5c5c5, #b0b1b2 3px, #85888a);
}

.lane {
    display: flex;
    height: 29px;
}

.gutter {
    display: flex;
    align-items: center;
    justify-content: flex-end;
    width: 15px;
    padding-right: 1px;
    border-top: 1px solid #c3c3c3;
    border-bottom: 1px solid #7b7b7b;
    border-right: 1px solid #606060;
    background: linear-gradient(90deg, #aaa, #8d8d8d);
}

.gutter i {
    width: 8px;
    height: 1px;
    background-color: #686868;
}

.clips {
    position: relative;
    flex: 1;
    border-top: 1px solid #cdcdcd;
    border-bottom: 1px solid #7b7b7b;
    background: repeating-linear-gradient(90deg, #b7b7b7 0 3px, #aaa 3px 4px);
    overflow: hidden;
}

.clips svg {
    width: 100%;
    height: 27px;
}

.clip-name {
    position: absolute;
    top: 2px;
    height: 12px;
    padding: 0 1px;
    border-radius: 2px;
    font-weight: bold;
    line-height: 13px;
    white-space: nowrap;
    overflow: hidden;
    color: #fff;
    background-color: #0a1d38;
}

.h-scroll {
    display: flex;
    height: 18px;
    margin-left: 15px;
    border-top: 3px solid #868686;
}

.h-scroll button {
    width: 16px;
    height: 15px;
}

.dark {
    border: 1px solid #8a8a8a;
    border-bottom-color: #444;
    background: linear-gradient(#555, #6e6e6e);
}

.h-track {
    flex: 1;
    background-color: #acacac;
}

.h-track span {
    display: block;
    width: calc(200% / 3);
    height: 15px;
    border: 1px solid #999;
    border-bottom-color: #444;
    background: linear-gradient(#929292, #555);
}

.zoom-btn {
    border: 1px solid #dcdcdc;
    border-right-color: #777;
    border-bottom-color: #777;
}

.minus {
    background: linear-gradient(#333, #333) center / 6px 2px no-repeat, linear-gradient(#bbb, #999);
}

.plus {
    background: linear-gradient(#333, #333) center / 6px 2px no-repeat, linear-gradient(#333, #333) center / 2px 6px no-repeat, linear-gradient(#bbb, #999);
}

.h-scroll .zoom-btn {
    width: 15px;
}

.corner,
.v-foot {
    background-color: #494949;
}

.v-scroll {
    display: flex;
    flex-direction: column;
    width: 15px;
    padding-top: 2px;
    background-color: #8a8a8a;
}

.v-scroll button {
    flex: none;
    width: 15px;
    height: 16px;
}

.v-scroll .az {
    height: 14px;
    align-items: stretch;
    font-weight: bold;
    line-height: 8px;
    color: #ddd;
    background-color: #2f2f2f;
}

.az span + span {
    align-self: flex-end;
}

.v-scroll .side {
    height: 21px;
    border: 1px solid #d6d6d6;
    border-bottom: 1px solid #666;
    background: linear-gradient(90deg, #c4c4c4, #999);
}

.v-track {
    flex: 1;
    background-color: #acacac;
}

.v-track span {
    display: block;
    height: 89%;
    border-top: 1px solid #aaa;
    border-bottom: 1px solid #333;
    background: linear-gradient(90deg, #919191, #505050);
}

.v-foot {
    height: 15px;
}
```
FILE: script.js
```js
const SPAN = 1380; // timeline width in units, 22 units per minute

// start:width plus kind (k solid, l light, w waveform, default navy), then an optional name
const audio1 = '4:3k 9:2 13:3l 26:3 29:5 35:1 37:3k 41:1 44:1 46:5k 53:3l 58:3k 62:3k 66:1 68:4k 75:1 77:5k 82:4 86:1 88:1 91:2 94:3 99:4 103:6 109:3 ' +
    '130:4 134:7 141:3k 145:1 147:2 152:1 153:3l 156:4k 161:1 163:3k 167:3k 175:8 187:2 190:1 191:4 202:3k 205:3 209:6k 215:3l 218:3 221:1 222:2 225:10k 236:2 ' +
    '242:3l 245:6k 251:3 254:2 259:2 262:3 265:3 269:4 275:4 281:2 283:2 286:3k 290:4k 294:4 298:5k 305:4k 310:1 313:1 315:2 318:3k 321:4 325:4 329:3 336:3k 341:3 ' +
    '346:3k 351:6 359:2 361:8 372:1 374:2 377:3l 381:2 383:7 389:5w 396:5 407:4 413:3l 421:2 423:3l 426:11 439:3 442:5 447:3k 452:3l 455:4 460:3l 463:3l 465:5 ' +
    '471:3 474:6 476:3 479:7 488:1 490:4 495:1 498:4 504:9 515:5 520:2 523:3l 526:5k 531:5 537:4l 541:2 544:3k 547:3 551:2 554:3k 558:4 563:2 566:3l 570:3k 574:1 576:1 ' +
    '578:3k 581:3 585:7 593:4 598:1 600:3l 603:6 610:1 612:4 617:1 619:4 623:3 626:7 633:3l 640:4k 644:3 646:4 651:2 653:3 657:4 662:1 663:3l 674:2 678:1 681:5 687:3k ' +
    '693:3l 698:3 704:1 706:1 709:2 715:2 718:6k 726:6 735:2 741:4k 746:3 752:3 763:1 771:5 778:2 780:3l 783:2 785:1 786:3l 788:4 794:2 798:5 807:3 815:10 827:2 831:5 ' +
    '837:5 842:3k 845:3 850:1 853:1 855:2 860:2 863:1 868:6 877:2 883:4k 887:5 893:1 897:1';

const audio2 = '7:2 17:3l 25:7 31:14:C 45:3 48:2 49:10 69:3 85:3l 88:6 93:22:kin 117:8w 132:2 140:1 153:3l 156:1 159:3 166:2 168:3k 171:3l 174:5 187:2 192:1 209:6 215:5k 219:4 ' +
    '224:2 228:6 238:3l 241:2 244:4 251:1 274:1 300:1 307:3l 311:4 324:2 328:1 332:5k 338:2 343:3k 347:6 356:8 367:4 390:6 401:6 411:4 417:4k 459:2 520:3k 535:3k 538:3l ' +
    '540:4k 550:5 554:3l 557:3 565:4 568:3 572:3k 577:3 583:4 590:3k 596:6 601:3l 603:4 611:1 613:1 616:3 637:2 638:11 656:4 660:5k 666:4 670:5 676:2 679:3k 684:4 690:1 695:3l ' +
    '698:1 701:2 703:3 708:3l 711:3 719:3k 724:6 732:3l 735:1 756:5 764:6 848:3l 851:2 857:3l 864:5 875:2 878:4 881:4 886:2 890:3l 897:1';

const audio3 = '0:7w 11:3 15:1 17:1 51:6 70:2 86:5k 97:2 112:4 122:1 124:2 141:4k 145:3 149:5 166:2 170:1 171:3l 182:7 188:3l 190:21:ten 210:3l 213:5 217:4k 220:4 224:10 233:6 239:5 ' +
    '273:1 296:4 301:4 305:3l 308:3l 313:5 323:3 335:1 338:2 342:1 374:2 388:1 390:1 392:1 394:3 418:2 459:3l 461:3 484:3l 486:9 494:3l 497:2 498:8 505:11 515:13 528:6 533:4 ' +
    '541:6w 547:4 561:3l 563:3k 665:1 667:3 673:1 690:1 692:3 701:3 714:2 717:3 748:4 751:3k 753:3 760:2 761:5 857:2 882:1 885:1 897:1';

const audio4 = '61:7 71:2 89:3 111:3 122:1 125:1 128:1 185:1 187:3k 207:1 209:2 212:3l 215:1 233:2 297:8 310:7 335:1 336:3 390:2 419:17:M 435:17:M 451:2 452:12 520:3l 522:2 542:5w 550:1 ' +
    '555:7w 632:11 690:2 700:5w 736:5 742:1 744:3k 762:10 772:4 775:4k 778:27:dont 804:2 805:12 822:9 830:2 831:5 835:14';

const audio5 = '0:7w 10:5 29:3l 31:3l 33:2 69:2 75:11 87:1 91:2 98:1 107:1 120:1 123:1 146:2 159:3 167:2 181:4w 188:1 190:1 203:1 207:1 213:1 215:1 232:3l 235:3k 245:9 253:17:w 269:24:wild ' +
    '292:7 298:7 304:5 307:4 311:4w 332:3k 336:1 338:1 519:5w 541:10w 637:3l 701:2 739:2 740:4 774:3l 776:3l 779:1 784:5 788:2 790:4 803:1 809:4k 812:3 884:3l 886:4k 889:8 896:8 903:5w';

const audio6 = '0:7w 11:2 16:11 56:2 62:3 70:5 89:2 93:1 97:2 107:4 116:2 126:4 129:3l 144:1 148:2 155:12w 214:2 243:5 316:4 319:2 320:6 325:11 335:4k 338:3l 340:3 370:3l 372:16 387:5 ' +
    '519:2 522:1 560:8 567:3l 569:4 572:2 573:12 605:12 616:5 845:3l 847:6 852:4 855:14:th 869:3l 871:4 874:9 882:4k 906:52:lost-in-tho';

const audio7 = '0:11w 12:3 59:4w 70:21:Tex 111:3l 113:6 125:1 308:10 329:8 336:2 465:11 475:3l 477:7 522:1 894:1';
const audio8 = '3:4 10:13w 22:8w 54:17:Dr 75:4 80:9 111:5 115:3 123:2 313:6 331:6 522:1 894:1';
const audio9 = '51:28:A8_L 110:4 113:10 894:1 901:13w:W';
const audio10 = '55:26:A5_ 113:4 119:7';

const tracks = [
    ['V1', '120:3l 123:3l 185:3l 188:3l 316:1 319:3l'],
    ['Audio1_L', audio1], ['Audio1_R', audio1],
    ['Audio2_L', audio2], ['Audio2_R', audio2],
    ['Audio 2', '441:1'],
    ['Audio3_L', audio3], ['Audio3_R', audio3],
    ['Audio 3', '174:2 175:3l 178:1 437:3l 439:3l 857:1'],
    ['Audio4_L', audio4], ['Audio4_R', audio4],
    ['Audio 4', '174:1'],
    ['Audio5_L', audio5], ['Audio5_R', audio5],
    ['Audio 5', '48:10'],
    ['Audio6_L', audio6], ['Audio6_R', audio6],
    ['Audio7_L', audio7], ['Audio7_R', audio7],
    ['Audio8_L', audio8], ['Audio8_R', audio8],
    ['Audio9_L', audio9], ['Audio9_R', audio9],
    ['Audi10_L', audio10], ['Audi10_R', audio10],
    ['Audi11_L', '75:8'], ['Audi11_R', '75:8w']
];

function wave(x, w) {
    const heights = [4, 7, 6, 9, 7, 8, 5, 6, 8, 5, 7];
    let top = '';
    let bottom = '';
    for (let i = 0; i < w - 1; i++) {
        const h = heights[(i + w) % heights.length];
        top += `L${x + 1 + i} ${13 - h}`;
        bottom = `L${x + 1 + i} ${13 + h}` + bottom;
    }
    return `<path d="M${x + 1} 13${top}L${x + w - 1} 13${bottom}z" fill="#14335f"/>`;
}

function drawLane(data) {
    let shadows = '';
    let shapes = '';
    let names = '';
    data.split(' ').forEach(item => {
        const [start, size, name] = item.split(':');
        const x = Number(start);
        const w = parseInt(size);
        const kind = size.replace(/\d/g, '');
        shadows += `<rect x="${x + w}" y="1" width="1" height="26" fill="#999"/>`;
        shapes += `<rect x="${x}" width="${w}" height="26"/>`;
        if (w > 2 && kind !== 'k') {
            const fill = kind === '' ? '#14335f' : '#8fb0e0';
            shapes += `<rect x="${x + 1}" y="1" width="${w - 2}" height="24" fill="${fill}"/>`;
        }
        if (kind === 'w') {
            shapes += wave(x, w);
        }
        if (name) {
            names += `<span class="clip-name" style="left: ${(x + 2) / SPAN * 100}%; max-width: ${(w - 3) / SPAN * 100}%">${name}</span>`;
        }
    });
    return `<svg viewBox="0 0 ${SPAN} 27" preserveAspectRatio="none">${shadows}${shapes}</svg>${names}`;
}

function trackRow(name) {
    const video = name === 'V1';
    const arrow = '<svg width="7" height="4"><path d="M0 0h7l-3.500 4z" fill="#26384f"/></svg>';
    const fader = '<svg width="6" height="11"><path d="M3 0v11M0 3.500h6M0 5.500h6" stroke="#666"/></svg>';
    const controls = video
        ? '<span class="rate">23.98</span><button class="video-online">O</button>'
        : '<div class="risma"><button aria-label="Record enable"><span class="dot"></span></button><button>I</button><button>S</button><button>M</button></div>';
    const io = video
        ? '<button class="vid">239</button><button class="vid">FQ</button><button class="vid dim">OS</button>'
        : `<button class="nn">n</button><button class="out">1</button><button class="fader" aria-label="Fader">${fader}</button><div class="vp"><button>v</button><button>p</button></div>`;
    const slots = video ? '' : '<i></i>'.repeat(5);
    return `
        <div class="track ${video ? 'video' : ''}">
            <div class="track-color"><button aria-label="Track options">${arrow}</button></div>
            <div class="track-main">
                <div class="plate"><button class="track-name">${name}</button>${controls}</div>
                ${video ? '' : '<span class="level"></span>'}
            </div>
            <div class="cell"></div>
            <div class="cell slots">${slots}</div>
            <div class="cell slots sends">${slots}</div>
            <div class="cell io-cell">${io}</div>
        </div>
    `;
}

document.getElementById('tracks').innerHTML = tracks.map(track => trackRow(track[0])).join('');
document.getElementById('lanes').innerHTML = tracks.map(([name, clips]) => `
    <div class="lane">
        <div class="gutter">${name === 'V1' ? '' : '<i></i>'}</div>
        <div class="clips">${drawLane(clips)}</div>
    </div>
`).join('');

// ruler labels
function fillRuler(id, count, pitch, label) {
    const ruler = document.querySelector(`[data-ruler="${id}"]`);
    for (let i = 0; i < count; i++) {
        const tick = document.createElement('span');
        tick.textContent = label(i);
        tick.style.width = pitch / SPAN * 100 + '%';
        ruler.appendChild(tick);
    }
}

const pad = n => String(n).padStart(2, '0');
fillRuler('bars', 15, 93.8, i => 1 + i * 128);
fillRuler('mins', 32, 43.93, i => i === 31 ? '62:' : i * 2 + ':00');
fillRuler('timecode', 13, 110, i => `${pad(Math.floor(i / 12))}:${pad(i * 5 % 60)}:00:00`);

// session overview: [y, ranges]
const pairRows = [
    [1, '13-17 32-39 48-112 133-138 162-218 223-239 253-254 292-298 303-310 315-322 323-325 326-340 366-368 399-410 411-425 427-429 435-446 453-462 465-473 479-481 522-524 573-574 585-591 592-602 619-622 625-627 633-634 635-644 655-659 663-674 680-694 701-708 745-756 766-776 784-791 796-803 875-880 992-998 1021-1037 1050-1069 1078-1090 1092-1098 1100-1106 1112-1120 1125-1132 1138-1159 1174-1182 1215-1238 1252-1269 1271-1287 1290-1301 1305-1312 1316-1319 1327-1333 1337-1347 1351-1362 1371-1378 1381-1392 1396-1404 1441-1453 1459-1470 1618-1627 1634-1641 1648-1657 1670-1673 1676-1688 1689-1695 1698-1703 1711-1712'],
    [10, '1-14 20-29 32-33 98-108 133-138 164-174 213-222 233-234 237-240 270-273 275-284 285-294 317-320 324-332 347-465 521-523 565-571 573-581 583-595 597-606 616-623 639-641 653-654 740-743 747-749 751-758 798-802 876-885 924-1025 1033-1052 1069-1079 1269-1271 1272-1278 1284-1285 1317-1318 1320-1326 1337-1343 1362-1373 1428-1441 1450-1462 1636-1637 1683-1684 1689-1690 1712-1713'],
    [19, '116-129 135-139 169-176 213-216 232-233 238-239 244-246 352-355 360-362 394-397 398-401 404-412 441-445 568-582 591-605 639-641 642-646 746-748 800-885 992-999 1033-1043 1049-1052 1060-1073 1206-1227 1316-1320 1336-1345 1405-1413 1416-1417 1420-1425 1454-1559 1568-1620'],
    [28, '1-14 20-29 56-67 133-136 143-164 167-168 174-178 185-186 204-207 228-231 233-236 279-283 304-307 318-322 347-353 358-361 362-363 386-388 394-397 399-401 406-408 410-412 444-450 451-455 467-601 633-640 641-642 645-648 990-999 1033-1051 1215-1221 1337-1341 1411-1420 1476-1489 1495-1515 1532-1534 1544-1555 1686-1732']
];
const singleRows = [
    [37, '1-14 22-24 30-51 108-112 119-123 134-142 172-174 177-179 185-189 204-209 220-224 240-251 274-275 281-284 296-319 407-409 411-412 463-474 603-654 706-749 990-994 996-998 1069-1116 1155-1184 1613-1691 1728-1827'],
    [7, '841-843'],
    [16, '332-341 834-844 1635-1636'],
    [25, '332-334'],
    [34, '91-111']
];

function bars(y, ranges) {
    return ranges.split(' ').map(range => {
        const [from, to] = range.split('-').map(Number);
        return `<rect x="${from}" y="${y}" width="${to - from}" height="2"/>`;
    }).join('');
}

document.getElementById('universe').innerHTML = '<g fill="#14386b">' +
    pairRows.map(([y, ranges]) => bars(y, ranges) + bars(y + 3, ranges)).join('') +
    singleRows.map(([y, ranges]) => bars(y, ranges)).join('') + '</g>';
```
